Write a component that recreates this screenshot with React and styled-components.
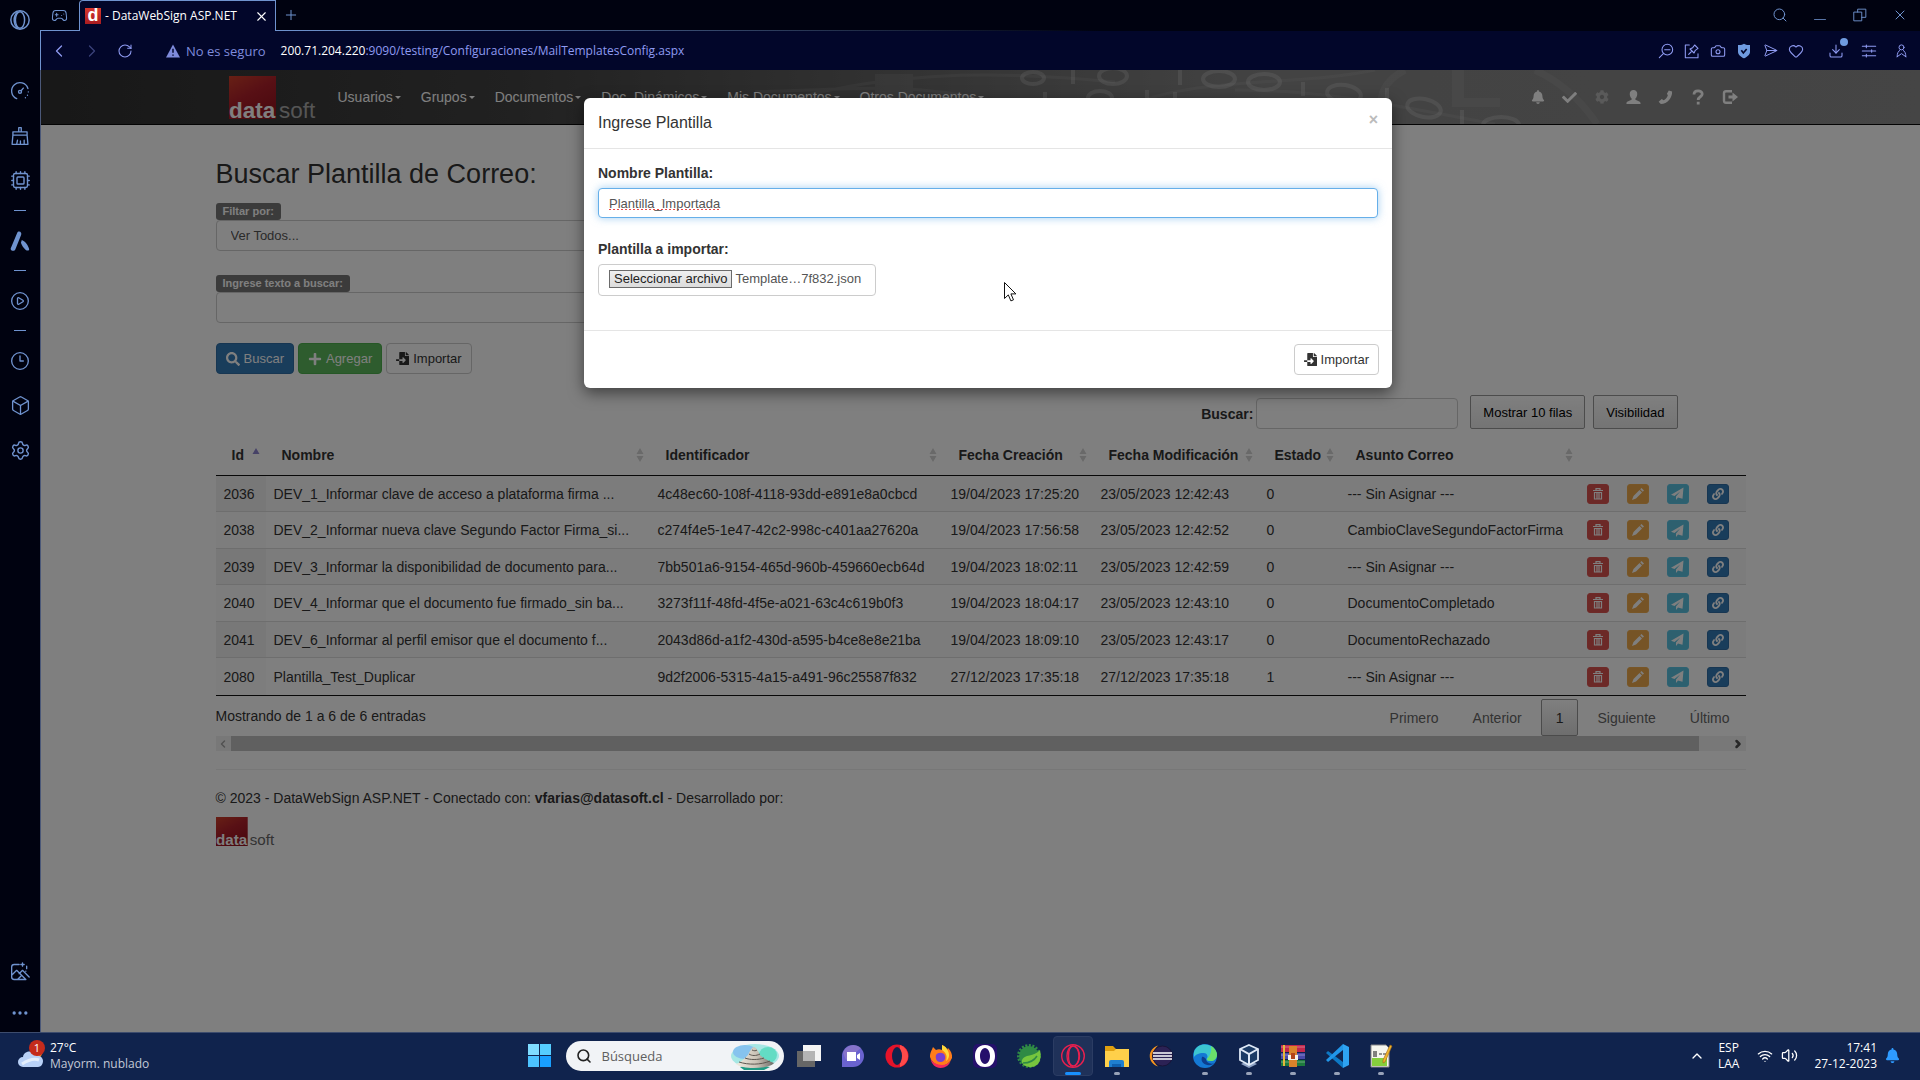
import React from 'react';
import styled, { createGlobalStyle } from 'styled-components';
import {
  Camera, ChevronLeft, ChevronRight, CirclePlay, Clock3, Box, Cpu, Download, Ellipsis,
  Gamepad2, Heart, Plus, RotateCw, Search, SendHorizontal, Settings,
  Volume2, Wifi, X, ChevronUp,
} from 'lucide-react';
import { FaFileImport, FaSearch, FaPlus, FaBell, FaCheck, FaCog, FaLink } from 'react-icons/fa';

const GlobalStyle = createGlobalStyle`
  * { box-sizing: border-box; }
  body {
    margin: 0;
    background: #000210;
    font-family: "Liberation Sans", Arial, sans-serif;
    font-size: 14px;
    line-height: 20px;
    color: #333;
  }
  button, input, select { font-family: inherit; }
  a { color: inherit; text-decoration: none; }
`;

const uiFont = '"Open Sans", "Noto Sans", sans-serif';

/* ---------- browser frame ---------- */

const Desktop = styled.div`
  min-height: 100vh;
  display: flex;
  flex-direction: column;
`;

const Browser = styled.div`
  flex: 1;
  display: flex;
`;

const SideBar = styled.nav`
  width: 40px;
  flex: none;
  display: flex;
  flex-direction: column;
  align-items: center;
  background: #000210;
  color: #6f93cf;
`;

const SideButton = styled.button`
  width: 40px;
  height: ${(p) => p.$height || 45}px;
  padding: 0;
  border: 0;
  background: none;
  color: inherit;
  display: flex;
  align-items: center;
  justify-content: center;
`;

const SideDash = styled.span`
  width: 12px;
  height: 1px;
  margin: 7px 0;
  background: #6f93cf;
`;

const SideGap = styled.div`
  height: ${(p) => p.$height}px;
  flex: ${(p) => (p.$grow ? 1 : 'none')};
`;

const Window = styled.div`
  flex: 1;
  min-width: 0;
  display: flex;
  flex-direction: column;
`;

const TabBar = styled.div`
  height: 31px;
  display: flex;
  align-items: stretch;
  background: #000210;
  color: #6f93cf;
`;

const TabLine = styled.div`
  display: flex;
  align-items: center;
  border-bottom: 1px solid #6f93cf;
  width: ${(p) => p.$width}px;
  justify-content: center;
`;

const Tab = styled.div`
  width: 197px;
  display: flex;
  align-items: center;
  gap: 4px;
  padding: 0 6px 0 5px;
  border: 1px solid #6f93cf;
  border-bottom: 0;
  border-radius: 4px 0 0 0;
  background: #02062a;
  color: #fff;
  font: 12px/16px ${uiFont};
  white-space: nowrap;
`;

const TabTitle = styled.span`
  flex: 1;
`;

const Favicon = styled.span`
  width: 16px;
  height: 16px;
  background: linear-gradient(#d8372e, #a81c20);
  color: #fff;
  font: bold 18px/15px "Liberation Sans", Arial, sans-serif;
  text-align: center;
`;

const PlainButton = styled.button`
  width: ${(p) => p.$width || 26}px;
  height: 26px;
  padding: 0;
  border: 0;
  background: none;
  color: inherit;
  display: flex;
  align-items: center;
  justify-content: center;
  position: relative;
`;

const TabRest = styled.div`
  flex: 1;
  display: flex;
  align-items: center;
  border-bottom: 1px solid;
  border-image: linear-gradient(to right, #6f93cf, #000210 50%) 1;
`;

const Spacer = styled.div`
  flex: 1;
`;

const Separator = styled.span`
  width: 10px;
`;

const AddressBar = styled.div`
  height: 39px;
  display: flex;
  align-items: center;
  padding: 0 2px 0 5px;
  border-left: 1px solid #6f93cf;
  background: #02062a;
  color: #8f9bf2;
  font: 12px/16px ${uiFont};
`;

const Security = styled.span`
  display: flex;
  align-items: center;
  gap: 6px;
  margin-left: 28px;
  font-size: 13px;
  color: #7f8bdc;
`;

const Url = styled.span`
  margin-left: 15px;
  color: #8f9bf2;

  b {
    font-weight: normal;
    color: #fff;
  }
`;

const Notice = styled.span`
  position: absolute;
  top: 0;
  right: 4px;
  width: 8px;
  height: 8px;
  border-radius: 50%;
  background: #6f9be0;
`;

/* ---------- web page ---------- */

const Viewport = styled.div`
  flex: 1;
  position: relative;
  background: #fff;
  border-left: 1px solid #4b5878;
`;

const Header = styled.header`
  height: 55px;
  position: relative;
  border-bottom: 1px solid #080808;
  background: linear-gradient(to right, #303030, #424242 25%, #646464 45%, #868686 65%, #8a8a8a);
`;

const HeaderArt = styled.svg`
  position: absolute;
  inset: 0 auto 0 38%;
  height: 54px;
`;

const HeaderInner = styled.div`
  position: relative;
  height: 54px;
  max-width: 1530px;
  margin: 0 auto;
  padding: 0 0 0 13px;
  display: flex;
  align-items: center;
  color: #fff;
`;

const Menu = styled.nav`
  display: flex;
  gap: 20px;
  margin-left: 21px;
`;

const MenuLink = styled.a`
  display: flex;
  align-items: center;
  gap: 2px;
  white-space: nowrap;

  &::after {
    content: '';
    border: 3px solid transparent;
    border-top: 3px solid #fff;
    border-bottom: 0;
  }
`;

const IconLink = styled.a`
  width: 32px;
  display: flex;
  justify-content: center;
  color: ${(p) => (p.$dim ? '#b4b4b4' : '#fff')};
`;

const Container = styled.main`
  max-width: 1530px;
  margin: 0 auto;
  padding-top: 34px;
`;

const PageTitle = styled.h2`
  margin: 0 0 14px;
  font-size: 27px;
  line-height: 30px;
  font-weight: normal;
`;

const Field = styled.div`
  width: 700px;
  max-width: 100%;
  margin-bottom: ${(p) => p.$space}px;
`;

const Badge = styled.label`
  display: block;
  width: max-content;
  padding: 0 7px;
  border-radius: 3px;
  background: #777;
  color: #fff;
  font-size: 11px;
  line-height: 17px;
  font-weight: bold;
`;

const Control = styled.input`
  display: block;
  width: 100%;
  height: 31px;
  padding: 0 10px;
  border: 1px solid #ccc;
  border-radius: 4px;
  background: #fff;
  color: #555;
  font-size: 13px;
`;

/* the dotted strip is the spell-check mark under the value */
const NameInput = styled(Control)`
  height: 30px;
  border-color: #66afe9;
  outline: 0;
  box-shadow: 0 0 8px rgba(102, 175, 233, 0.6);
  background: repeating-linear-gradient(to right, #e84a4a 0 2px, transparent 2px 4px) 10px 20px / 110px 1px no-repeat #fff;
`;

const SelectBox = styled(Control)`
  padding: 0 14px;
  appearance: none;
`;

const ButtonRow = styled.div`
  display: flex;
  gap: 4px;
  margin-bottom: 21px;
`;

const tones = {
  default: ['#fff', '#ccc', '#333'],
  primary: ['#337ab7', '#2e6da4', '#fff'],
  success: ['#5cb85c', '#4cae4c', '#fff'],
  danger: ['#d9534f', '#dd5450', '#fff'],
  warning: ['#eda94c', '#f0ad4e', '#fff'],
  info: ['#5bc0de', '#5bc4e4', '#fff'],
};

const Button = styled.button`
  height: 31px;
  padding: 0 9px;
  display: flex;
  align-items: center;
  gap: 4px;
  border: 1px solid ${(p) => tones[p.$tone || 'default'][1]};
  border-radius: 4px;
  background: ${(p) => tones[p.$tone || 'default'][0]};
  color: ${(p) => tones[p.$tone || 'default'][2]};
  font-size: 13px;
  white-space: nowrap;
`;

const SmallButton = styled(Button)`
  width: 22px;
  height: 20px;
  padding: 0;
  justify-content: center;
  border-radius: 3px;
`;

const TableTools = styled.div`
  display: flex;
  justify-content: flex-end;
  align-items: flex-end;
  gap: 8px;
  padding-right: 68px;
`;

const SearchLabel = styled.label`
  display: flex;
  align-items: center;
  gap: 3px;
  margin-right: 4px;
  font-weight: bold;

  input {
    width: 202px;
  }
`;

const ToolButton = styled.button`
  height: 34px;
  padding: 0 12px;
  border: 1px solid #999;
  border-radius: 2px;
  background: linear-gradient(#fff, #e9e9e9);
  color: #000;
  font-size: 13px;
`;

const Table = styled.table`
  width: 100%;
  table-layout: fixed;
  border-collapse: separate;
  border-spacing: 0;
  border-bottom: 1px solid #111;
  white-space: nowrap;
`;

const Th = styled.th`
  padding: 16px 6px 10px 16px;
  border-bottom: 1px solid #111;
  text-align: left;

  div {
    display: flex;
    align-items: center;
    justify-content: space-between;
  }
`;

const Tr = styled.tr`
  height: 36px;
  background: #f9f9f9;

  &:nth-child(even) {
    height: 37px;
    background: #fff;
  }

  &:last-child td {
    border-bottom: 0;
  }
`;

const Td = styled.td`
  padding: 0 8px;
  border-bottom: 1px solid #ddd;

  ${Tr} &:first-child {
    background: #fafafa;
  }

  ${Tr}:nth-child(odd) &:first-child {
    background: #f1f1f1;
  }
`;

const TableFoot = styled.div`
  display: flex;
  justify-content: space-between;
  padding-top: 3px;
`;

const Info = styled.div`
  padding-top: 7px;
`;

const Pages = styled.div`
  display: flex;
  gap: 4px;
  padding-right: 1px;
`;

const PageButton = styled.button`
  height: 37px;
  padding: 0 14px;
  border: 1px solid ${(p) => (p.$current ? '#979797' : 'transparent')};
  border-radius: 2px;
  background: ${(p) => (p.$current ? 'linear-gradient(#fff, #dcdcdc)' : 'none')};
  color: ${(p) => (p.$current ? '#333' : '#666')};
  font-size: 14px;
`;

const ScrollTrack = styled.div`
  height: 15px;
  display: flex;
  align-items: center;
  background: #f1f1f1;
`;

const ScrollArrow = styled.span`
  width: 15px;
  display: flex;
  justify-content: center;
`;

const ScrollThumb = styled.div`
  width: 96%;
  height: 15px;
  margin-right: auto;
  background: #c1c1c1;
`;

const Footer = styled.footer`
  margin-top: 18px;
  padding-top: 18px;
  border-top: 1px solid #eee;

  p {
    margin: 0 0 9px;
  }
`;

/* ---------- modal ---------- */

const Backdrop = styled.div`
  position: absolute;
  inset: 0;
  z-index: 1;
  display: flex;
  justify-content: center;
  align-items: flex-start;
  padding: 28px 0 0 15px;
  background: rgba(0, 0, 0, 0.5);
`;

const Dialog = styled.div`
  width: 808px;
  max-width: 100%;
  border-radius: 6px;
  background: #fff;
  box-shadow: 0 5px 15px rgba(0, 0, 0, 0.5);
`;

const DialogHead = styled.div`
  height: 51px;
  padding: 0 14px;
  display: flex;
  align-items: center;
  justify-content: space-between;
  border-bottom: 1px solid #e5e5e5;

  h4 {
    margin: 0;
    font-size: 16px;
    font-weight: normal;
  }
`;

const CloseButton = styled.button`
  padding: 0;
  height: 24px;
  display: flex;
  border: 0;
  background: none;
  color: #bbb;
  font-size: 16px;
  font-weight: bold;
`;

const DialogBody = styled.div`
  padding: 14px 14px 13px;
`;

const DialogField = styled.div`
  margin-bottom: 21px;
`;

const Label = styled.label`
  display: block;
  margin-bottom: 5px;
  font-weight: bold;
`;

const FileBox = styled.div`
  position: relative;
  width: max-content;
  height: 32px;
  padding: 5px 14px 0 10px;
  display: flex;
  align-items: flex-start;
  gap: 3px;
  border: 1px solid #ccc;
  border-radius: 4px;
  color: #555;
  font-size: 13px;
  line-height: 18px;

  input {
    position: absolute;
    inset: 0;
    width: 100%;
    opacity: 0;
  }
`;

const FileFace = styled.span`
  padding: 0 4px;
  border: 1px solid #6b6b6b;
  background: linear-gradient(#efefef, #dcdcdc);
  color: #222;
  line-height: 16px;
`;

const DialogFoot = styled.div`
  padding: 13px;
  display: flex;
  justify-content: flex-end;
  border-top: 1px solid #e5e5e5;
`;

const Pointer = styled.svg`
  position: absolute;
  z-index: 2;
  left: 963px;
  top: 212px;
`;

/* ---------- taskbar ---------- */

const TaskBar = styled.footer`
  height: 48px;
  display: grid;
  grid-template-columns: 1fr auto 1fr;
  align-items: center;
  padding-bottom: 2px;
  border-top: 1px solid #3d4c6d;
  background: #10234d;
  color: #fff;
  font: 12px/16px ${uiFont};
`;

const Weather = styled.div`
  display: flex;
  gap: 5px;
  padding-left: 18px;

  p {
    margin: 0;
    color: #c3c9d6;
  }

  p:first-child {
    color: #fff;
  }
`;

const TaskGroup = styled.div`
  display: flex;
  align-items: center;
  gap: 4px;
`;

const TaskButton = styled.button`
  position: relative;
  width: 40px;
  height: 40px;
  padding: 0;
  display: flex;
  align-items: center;
  justify-content: center;
  border: 1px solid ${(p) => (p.$active ? '#2b3c63' : 'transparent')};
  border-radius: 4px;
  background: ${(p) => (p.$active ? '#1f3159' : 'none')};

  &::after {
    content: '';
    position: absolute;
    bottom: 0;
    width: ${(p) => (p.$active ? 16 : p.$open ? 6 : 0)}px;
    height: 3px;
    border-radius: 2px;
    background: ${(p) => (p.$active ? '#1890ff' : '#98a2b8')};
  }
`;

const SearchPill = styled.label`
  width: 218px;
  height: 30px;
  margin: 0 1px 0 2px;
  padding: 0 4px 0 10px;
  display: flex;
  align-items: center;
  gap: 10px;
  border-radius: 15px;
  background: #f1f3f6;
  color: #222;

  input {
    flex: 1;
    min-width: 0;
    padding: 0;
    border: 0;
    background: none;
    outline: 0;
    font: 13px/16px ${uiFont};
  }

  input::placeholder {
    color: #5e5e5e;
  }
`;

const Tray = styled.div`
  display: flex;
  justify-content: flex-end;
  align-items: center;
  gap: 8px;
  padding-right: 20px;
`;

const TrayText = styled.div`
  text-align: ${(p) => p.$align};
  margin: 0 ${(p) => p.$right || 0}px 0 ${(p) => p.$left || 0}px;
`;

/* ---------- drawings ---------- */

const Svg = ({ size = 24, box = 24, children, ...rest }) => (
  <svg width={size} height={size} viewBox={`0 0 ${box} ${box}`} fill="none" aria-hidden="true" {...rest}>
    {children}
  </svg>
);

const Line = (props) => (
  <Svg stroke="currentColor" strokeWidth="1.6" strokeLinecap="round" strokeLinejoin="round" {...props} />
);

const Logo = ({ height, light, id }) => (
  <svg height={height} viewBox="0 0 88 43" overflow="visible" role="img" aria-label="datasoft">
    <defs>
      <linearGradient id={id} x1="0" y1="0" x2="0.6" y2="1">
        <stop offset="0" stopColor="#d0402a" />
        <stop offset="0.5" stopColor="#b0202a" />
        <stop offset="1" stopColor="#981420" />
      </linearGradient>
    </defs>
    <rect width="47" height="43" fill={`url(#${id})`} />
    <text x="0" y="42" fill="#fff" fontFamily="Liberation Sans" fontWeight="bold" fontSize="22.500">data</text>
    <text x="50" y="42" fill={light} fontFamily="Liberation Sans" fontSize="22.500">soft</text>
  </svg>
);

const OperaIcon = () => (
  <Line size={22}>
    <circle cx="12" cy="12" r="10" />
    <ellipse cx="12" cy="12" rx="5" ry="9" />
    <path d="M9 3.500C4.500 8 4.500 16 9 20.500" />
  </Line>
);

const GaugeIcon = () => (
  <Line size={20}>
    <path d="M8 21.200A10 10 0 1 1 21.500 9" />
    <circle cx="12" cy="13" r="1.800" />
    <path d="M13.300 11.700 16 8.500M22 13v.1M21 17v.1M18.500 20v.1" />
  </Line>
);

const BrushIcon = () => (
  <Line size={20}>
    <path d="M10.500 7V2h3v5M3.500 11V7h17v4M3.500 11h17l1 11h-19zM8 22l1-5M12.500 22v-4M17 22v-5" />
  </Line>
);

const ChipIcon = () => <Cpu size={21} strokeWidth={1.6} />;

const AriaIcon = () => (
  <Svg size={22} fill="currentColor">
    <path d="M11 1.500c2 0 3 2 2.200 4L7 21c-.8 2-3 2-4.500 1-1-.8-.8-2 0-3.500L9 3c.4-1 1-1.500 2-1.500zM14 11c4 1.500 7 6 8 10 .2 1.500-2 2-4 .5C16 20 14 17 13 14z" />
  </Svg>
);

const PictureIcon = () => (
  <Line size={20}>
    <path d="M11 3H5a3 3 0 0 0-3 3v12a3 3 0 0 0 3 3h13M2 16l6-6 11 11M11 14l4-4 8 8M15 1v4M13 3h4M20 5v3M19 11v.1M9 21l4-4" />
  </Line>
);

const WarnIcon = () => (
  <Svg size={14}>
    <path d="M12 1 24 23H0z" fill="currentColor" />
    <path d="M12 8v7M12 18v2" stroke="#02062a" strokeWidth="2.500" />
  </Svg>
);

const ZoomOutIcon = () => (
  <Line size={16}><circle cx="14" cy="10" r="8" /><path d="M8 16 2 22M10 10h8" /></Line>
);

const PinIcon = () => (
  <Line size={16}><path d="M8 3H2v19h19v-6M7 17l5-5M9 9l6 6 2-4 4-3-5-5-3 4z" /></Line>
);

const ShieldIcon = () => (
  <Svg size={16}>
    <path d="M12 1c3 2 6 2 9 2v10c0 5-5 8-9 10-4-2-9-5-9-10V3c3 0 6 0 9-2z" fill="#6f9be0" />
    <path d="m8 11 3 4 5-6" stroke="#02062a" strokeWidth="2.500" />
  </Svg>
);

const SlidersIcon = () => (
  <Line size={16}><path d="M2 5h20M2 12h20M2 19h20M8 3v4M16 10v4M8 17v4" /></Line>
);

const PersonIcon = () => (
  <Line size={15}><circle cx="12" cy="7" r="4" /><path d="M5 22c0-6 2-9 4-10M19 22c0-6-2-9-4-10M5 22l7-5 7 5" /></Line>
);

const RestoreIcon = () => (
  <Line size={14} strokeLinejoin="miter"><path d="M2 7h13v15H2zM8 7V2h14v14h-7" /></Line>
);

const UserIcon = () => (
  <Svg size={15} box={16} fill="currentColor">
    <path d="M8 0c2.600 0 4 1.800 4 4.200 0 2-.8 3.800-2 4.800v1.500c2 .8 5.500 2 5.500 3.500V15H.5v-1c0-1.500 3.500-2.700 5.500-3.500V9C4.800 8 4 6.200 4 4.200 4 1.800 5.400 0 8 0z" />
  </Svg>
);

const PhoneIcon = () => (
  <Svg size={15} box={16} fill="currentColor">
    <path d="M11.500.5 15 1.500c.6 6-5 13.500-12 13.500L.7 12.500 4 9.700l2 1.300c2-1 4-3.500 4.500-5.500L9.500 4z" />
  </Svg>
);

const HelpIcon = () => (
  <Svg size={16} box={16} stroke="currentColor" strokeWidth="2.800">
    <path d="M4 5.500C4 .5 12.200.8 12.200 5 12.200 8 8.200 7.500 8.200 11M8.200 12.700v2.800" />
  </Svg>
);

const ExitIcon = () => (
  <Svg size={16} box={16}>
    <path d="M10 2.200H4A2 2 0 0 0 2 4v8a2 2 0 0 0 2 1.800h6" stroke="currentColor" strokeWidth="2.400" />
    <path d="M6.500 6.500h4V3.500L16 8l-5.500 4.500v-3h-4z" fill="currentColor" />
  </Svg>
);

const TrashIcon = () => (
  <Svg size={12} box={12} stroke="#fff">
    <path d="M1 2.500h10M4 2V.6h4V2" strokeWidth="1.200" />
    <path d="M2.500 4.500h7v6.500h-7zM5 4.500v6.500M7 4.500v6.500" strokeWidth="1.200" />
  </Svg>
);

const PencilIcon = () => (
  <Svg size={12} box={12} fill="#fff"><path d="M9.500 0 12 2.500 10.700 3.800 8.200 1.300zM7.500 2 10 4.500 4 10.500 0 12l1.500-4z" /></Svg>
);

const SendIcon = () => (
  <Svg size={13} box={13} fill="#fff"><path d="M12.500.5 0 7.800l3.500 1.300L11 3zM12.500.5 5 9.500V13l2-2.500 4.500 1.300z" /></Svg>
);

const SortIcon = () => (
  <svg width="8" height="14" viewBox="0 0 8 14" fill="#d2d2d2" aria-hidden="true">
    <path d="M4 0 7.500 6h-7zM4 14 .5 8h7z" />
  </svg>
);

const SortedIcon = () => (
  <svg width="8" height="14" viewBox="0 0 8 14" fill="#8d85cf" aria-hidden="true">
    <path d="M4 0 7.500 6h-7z" />
  </svg>
);

const CloudIcon = () => (
  <Svg size={27} box={27}>
    <circle cx="18" cy="13" r="6" fill="#f38b1c" />
    <path d="M5 27a5 5 0 0 1 0-10c1-7 12-7 13-1 4-1 7 2 7 5s-2 6-5 6z" fill="#b9d1f7" />
    <path d="M4 24c6-4 12-6 17-4" stroke="#e4eefc" strokeWidth="3" />
    <circle cx="19" cy="8" r="8" fill="#c42b1c" />
    <text x="19" y="12" fontSize="11" fill="#fff" textAnchor="middle" fontFamily="Open Sans">1</text>
  </Svg>
);

const ShellIcon = () => (
  <svg width="50" height="28" viewBox="0 0 50 28" aria-hidden="true">
    <defs>
      <linearGradient id="shell" x1="0" y1="0" x2="1" y2="0">
        <stop offset="0" stopColor="#f1ebdf" />
        <stop offset="0.55" stopColor="#c9c2b6" />
        <stop offset="1" stopColor="#6d6a66" />
      </linearGradient>
    </defs>
    <ellipse cx="25" cy="14" rx="24" ry="12" fill="#a6e7e4" />
    <ellipse cx="15" cy="10" rx="12" ry="7" fill="#86c3ee" />
    <ellipse cx="38" cy="13" rx="9" ry="8" fill="#63dcc4" />
    <path d="M10 25c8-2 22-2 30 0l-6 3H14z" fill="#1f9b84" />
    <path d="M6 22c4-1 8-5 12-9 2-4 4-8 6-8s4 4 6 8c4 4 9 6 14 8-4 6-32 7-38 1z" fill="url(#shell)" />
    <path d="M22 8c2 1 4 1 5 0M19 12c3 2 7 2 11 0M15 16c5 2 13 2 19 0M9 20c9 3 22 3 31-1" stroke="#5c5750" fill="none" />
  </svg>
);

const WindowsIcon = () => (
  <Svg size={23} box={23}>
    <path d="M0 0h11v11H0z" fill="#7fdcff" />
    <path d="M12 0h11v11H12z" fill="#56cdff" />
    <path d="M0 12h11v11H0z" fill="#4cc3ff" />
    <path d="M12 12h11v11H12z" fill="#199fff" />
  </Svg>
);

const taskIcons = {
  'Vista de tareas': (
    <Svg>
      <path d="M6 1h18v16H6z" fill="#f4f4f4" />
      <path d="M0 7h18v16H0z" fill="#666" />
      <path d="M6 7h12v10H6z" fill="#b4b4b4" />
    </Svg>
  ),
  Chat: (
    <Svg>
      <path d="M1 23V12a11 11 0 1 1 11 11z" fill="#6a63d0" />
      <path d="M2 9a11 11 0 0 1 18-5L5 16z" fill="#9a7fc6" opacity=".6" />
      <path d="M6 8h9v9H6zM16 11l3-2v7l-3-2z" fill="#fff" />
    </Svg>
  ),
  Opera: (
    <Svg>
      <circle cx="12" cy="12" r="11.500" fill="#e5132a" />
      <path d="M15 1a11.500 11.500 0 0 1 0 22z" fill="#ff4a4a" />
      <ellipse cx="12" cy="12" rx="5" ry="9" fill="#10234d" />
    </Svg>
  ),
  Firefox: (
    <Svg>
      <path d="M1 13C1 8 3 6 4 3l3 3c2-1 4-1 6 0V1c3 1 4 3 5 5l1-2c3 3 4.500 6 4 10A11.500 11.500 0 0 1 1 13z" fill="#ff7d1a" />
      <path d="M13 1c3 1 5 3 6 6 2 4 1 8-2 10 2-6-1-9-4-11z" fill="#ffd83a" />
      <path d="M1.500 15c4 7 16 8 20 2-1 4-5 7-10 7S2.500 20 1.500 15z" fill="#f5295c" />
      <path d="M7 11c2-3 8-3 9 1s-2 6-5 6-5-3-4-7z" fill="#7a3fd0" />
    </Svg>
  ),
  'Opera Crypto': (
    <Svg>
      <rect width="24" height="24" rx="5" fill="#25106b" />
      <path fillRule="evenodd" d="M12 1c7 0 10 5 10 11s-3 11-10 11S2 18 2 12 5 1 12 1zm0 3c-3 0-5 4-5 8s2 8 5 8 5-4 5-8-2-8-5-8z" fill="#fff" />
    </Svg>
  ),
  Spring: (
    <Svg>
      <circle cx="12" cy="12" r="10.500" stroke="#2f8a45" strokeWidth="3" strokeDasharray="2 1.500" />
      <circle cx="12" cy="12" r="10" fill="#2f8a45" />
      <path d="M23 6c2 9-1 17-9 17C8 23 4 20 5 16 7 10 17 13 23 6z" fill="#76c63e" />
      <path d="M6 19c6 0 11-2 14-7" stroke="#2f8a45" strokeWidth="1.500" />
    </Svg>
  ),
  'Opera GX': (
    <Svg stroke="#e8204f" strokeWidth="1.400">
      <circle cx="12" cy="12" r="11.300" />
      <ellipse cx="12" cy="12" rx="6" ry="10" />
      <path d="M12 2C6 3 6 21 12 22M14 2c6 5 6 15 0 20" />
    </Svg>
  ),
  Explorador: (
    <Svg>
      <path d="M0 2h8l3 3h12v5H0z" fill="#e0a010" />
      <path d="M0 7h9l2-2h13v18H0z" fill="#ffd04a" />
      <path d="M4 23v-5a2 2 0 0 1 2-2h11a2 2 0 0 1 2 2v5z" fill="#1f7fd0" />
      <path d="M7 20h9v3H7z" fill="#0f5fae" />
    </Svg>
  ),
  Eclipse: (
    <Svg>
      <path d="M9 1.500C-2 5-2 19 9 22.500 3 18 3 6 9 1.500z" fill="#f7941e" />
      <circle cx="13.500" cy="12" r="10" fill="#2c2255" stroke="#1a1438" />
      <path d="M4 9h19M4 12h19M4 15h19" stroke="#fff" strokeWidth="1.300" />
    </Svg>
  ),
  Edge: (
    <Svg>
      <circle cx="12" cy="12" r="12" fill="#1479d4" />
      <path d="M1 8C4-2 20-2 23.500 9c1 5-2 8-6 8-3 0-4-1-4-2 2-2 1-6-3-6-5 0-8 2-9.500 4z" fill="#3cc6d0" />
      <path d="M18 2c4 2 6 6 6 9-.5 4-3 6-6 6-3 0-4-1-4-2 3-3 5-8 4-13z" fill="#6ae06a" />
      <path d="M9 13c-2 5 3 9 9 8l4-2c-5 2-9-1-9-4-1-1-3-3-4-2z" fill="#0c3f8e" />
    </Svg>
  ),
  VirtualBox: (
    <Svg>
      <path d="m12 16 8 4-8 4-8-4z" fill="#8ea2c4" />
      <path d="m12 1 9 4v11l-9 5-9-5V5z" fill="#1b3b66" stroke="#dfe9f7" strokeWidth="1.800" />
      <path d="m3 5 9 5 9-5M12 10v11" stroke="#dfe9f7" strokeWidth="2" />
    </Svg>
  ),
  WinRAR: (
    <Svg>
      <path d="M0 1h24v7H0z" fill="#c2274b" />
      <path d="M0 9h24v6H0z" fill="#4a49a8" />
      <path d="M0 16h24v6H0z" fill="#1d7a3d" />
      <path d="M0 3h24M0 11h24M0 18h24" stroke="#fff" opacity=".35" />
      <path d="M3 1v21" stroke="#e5b63a" strokeWidth="2" />
      <path d="M8 2h8v21H8z" fill="#d9822b" />
      <path d="M7 11h10v5H7z" fill="#f4f1e8" />
      <path d="M10 9h4v6h-4z" fill="#b3431a" />
    </Svg>
  ),
  'Visual Studio Code': (
    <Svg>
      <path d="M18 0v24L1 9l2-2 15 11z" fill="#0d78c4" />
      <path d="M18 0v6L3 18l-2-2z" fill="#2196e8" />
      <path d="m18 0 6 3v18l-6 3z" fill="#2ea3f2" />
    </Svg>
  ),
  'Notepad++': (
    <Svg>
      <path d="M2 1h15l3 3v19H2z" fill="#f6f6ee" stroke="#888" />
      <path d="M3 14h15v8H3z" fill="#86cf3c" />
      <path d="M7 7v6M10 10h3M14 10h3M5 7v6" stroke="#333" strokeWidth="1.200" />
      <path d="m21 1 2 1-7 16-2 1v-3z" fill="#f0b52a" stroke="#a0641a" strokeWidth=".6" />
    </Svg>
  ),
};

/* ---------- data ---------- */

const menu = ['Usuarios', 'Grupos', 'Documentos', 'Doc. Dinámicos', 'Mis Documentos', 'Otros Documentos'];

const columns = ['Nombre', 'Identificador', 'Fecha Creación', 'Fecha Modificación', 'Estado', 'Asunto Correo'];

const widths = [50, null, 293, 150, 166, 81, 239, 40, 40, 40, 47];

const rows = [
  ['2036', 'DEV_1_Informar clave de acceso a plataforma firma ...', '4c48ec60-108f-4118-93dd-e891e8a0cbcd', '19/04/2023 17:25:20', '23/05/2023 12:42:43', '0', '--- Sin Asignar ---'],
  ['2038', 'DEV_2_Informar nueva clave Segundo Factor Firma_si...', 'c274f4e5-1e47-42c2-998c-c401aa27620a', '19/04/2023 17:56:58', '23/05/2023 12:42:52', '0', 'CambioClaveSegundoFactorFirma'],
  ['2039', 'DEV_3_Informar la disponibilidad de documento para...', '7bb501a6-9154-465d-960b-459660ecb64d', '19/04/2023 18:02:11', '23/05/2023 12:42:59', '0', '--- Sin Asignar ---'],
  ['2040', 'DEV_4_Informar que el documento fue firmado_sin ba...', '3273f11f-48fd-4f5e-a021-63c4c619b0f3', '19/04/2023 18:04:17', '23/05/2023 12:43:10', '0', 'DocumentoCompletado'],
  ['2041', 'DEV_6_Informar al perfil emisor que el documento f...', '2043d86d-a1f2-430d-a595-b4ce8e8e21ba', '19/04/2023 18:09:10', '23/05/2023 12:43:17', '0', 'DocumentoRechazado'],
  ['2080', 'Plantilla_Test_Duplicar', '9d2f2006-5315-4a15-a491-96c25587f832', '27/12/2023 17:35:18', '27/12/2023 17:35:18', '1', '--- Sin Asignar ---'],
];

const actions = [
  ['danger', 'Eliminar', <TrashIcon />],
  ['warning', 'Editar', <PencilIcon />],
  ['info', 'Enviar', <SendIcon />],
  ['primary', 'Duplicar', <FaLink size={12} />],
];

const openTasks = ['Explorador', 'Edge', 'VirtualBox', 'WinRAR', 'Visual Studio Code', 'Notepad++'];

/* ---------- parts ---------- */

const Side = () => (
  <SideBar>
    <SideButton $height={40} aria-label="Opera"><OperaIcon /></SideButton>
    <SideGap $height={28} />
    <SideButton aria-label="Inicio"><GaugeIcon /></SideButton>
    <SideButton aria-label="Limpiar"><BrushIcon /></SideButton>
    <SideButton aria-label="Control"><ChipIcon /></SideButton>
    <SideDash />
    <SideButton aria-label="Aria"><AriaIcon /></SideButton>
    <SideDash />
    <SideButton aria-label="Reproductor"><CirclePlay size={20} strokeWidth={1.6} /></SideButton>
    <SideDash />
    <SideButton aria-label="Historial"><Clock3 size={20} strokeWidth={1.6} /></SideButton>
    <SideButton aria-label="Extensiones"><Box size={21} strokeWidth={1.5} /></SideButton>
    <SideButton aria-label="Ajustes"><Settings size={21} strokeWidth={1.6} /></SideButton>
    <SideGap $grow />
    <SideButton aria-label="Fondo"><PictureIcon /></SideButton>
    <SideButton $height={38} aria-label="Más"><Ellipsis size={20} /></SideButton>
  </SideBar>
);

const Chrome = () => (
  <>
    <TabBar>
      <TabLine $width={39}><Gamepad2 size={17} strokeWidth={1.5} /></TabLine>
      <Tab>
        <Favicon>d</Favicon>
        <TabTitle>- DataWebSign ASP.NET</TabTitle>
        <X size={15} strokeWidth={1.8} />
      </Tab>
      <TabRest>
        <PlainButton $width={30} aria-label="Nueva pestaña"><Plus size={16} strokeWidth={1.5} /></PlainButton>
        <Spacer />
        <PlainButton $width={40} aria-label="Buscar"><Search size={16} strokeWidth={1.5} /></PlainButton>
        <PlainButton $width={40} aria-label="Minimizar"><Line size={12}><path d="M1 21h22" /></Line></PlainButton>
        <PlainButton $width={40} aria-label="Restaurar"><RestoreIcon /></PlainButton>
        <PlainButton $width={40} aria-label="Cerrar"><X size={16} strokeWidth={1.5} /></PlainButton>
      </TabRest>
    </TabBar>
    <AddressBar>
      <PlainButton aria-label="Atrás"><ChevronLeft size={20} strokeWidth={1.5} /></PlainButton>
      <PlainButton $width={40} aria-label="Adelante"><ChevronRight size={20} strokeWidth={1.5} opacity={0.4} /></PlainButton>
      <PlainButton aria-label="Recargar"><RotateCw size={16} strokeWidth={1.6} /></PlainButton>
      <Security><WarnIcon />No es seguro</Security>
      <Url><b>200.71.204.220</b>:9090/testing/Configuraciones/MailTemplatesConfig.aspx</Url>
      <Spacer />
      <PlainButton aria-label="Alejar"><ZoomOutIcon /></PlainButton>
      <PlainButton aria-label="Fijar"><PinIcon /></PlainButton>
      <PlainButton aria-label="Captura"><Camera size={16} strokeWidth={1.6} /></PlainButton>
      <PlainButton aria-label="Protección"><ShieldIcon /></PlainButton>
      <PlainButton aria-label="Enviar"><SendHorizontal size={15} strokeWidth={1.6} /></PlainButton>
      <PlainButton aria-label="Favorito"><Heart size={16} strokeWidth={1.6} /></PlainButton>
      <Separator />
      <PlainButton $width={33} aria-label="Descargas"><Download size={16} strokeWidth={1.6} /><Notice /></PlainButton>
      <PlainButton $width={33} aria-label="Configuración"><SlidersIcon /></PlainButton>
      <PlainButton $width={33} aria-label="Perfil"><PersonIcon /></PlainButton>
    </AddressBar>
  </>
);

const PageHeader = () => (
  <Header>
    <HeaderArt viewBox="0 0 850 54" fill="none" stroke="#fff" aria-hidden="true">
      <g opacity=".08">
        <path d="M0 40C120 0 240 0 360 12M-90 10c80 30 200-10 320 20M330 54C430 0 520 20 620 0M480 20c100 0 180 20 260 34" strokeWidth="3" />
        <path d="M780 0c30 14 50 36 62 54M650 0c-20 10-28 24-24 54" strokeWidth="7" />
        <path d="M-92 0h38v44h-38zM120 4h38v40h-38zM697 0h12v28h36v9h-48z" fill="#fff" stroke="none" />
      </g>
      <g opacity=".2" strokeWidth="4">
        <ellipse cx="278" cy="8" rx="11" ry="6" />
        <path d="M318 0v14M425 0v15" />
        <ellipse cx="358" cy="6" rx="14" ry="8" />
        <ellipse cx="464" cy="9" rx="16" ry="8" />
        <ellipse cx="509" cy="12" rx="16" ry="8" />
        <path d="M548 12v14M632 18v16" />
        <ellipse cx="589" cy="24" rx="17" ry="9" transform="rotate(8 589 24)" />
        <ellipse cx="669" cy="38" rx="17" ry="9" transform="rotate(12 669 38)" />
        <path d="M707 40v14" />
        <ellipse cx="746" cy="55" rx="18" ry="8" />
        <path d="M290 22v12M392 20v12M420 22v12" />
        <ellipse cx="345" cy="28" rx="12" ry="7" />
      </g>
    </HeaderArt>
    <HeaderInner>
      <Logo height={43} light="#aaa" id="brand-top" />
      <Menu>
        {menu.map((item) => <MenuLink key={item} href="#">{item}</MenuLink>)}
      </Menu>
      <Spacer />
      <IconLink href="#" aria-label="Notificaciones"><FaBell size={14} /></IconLink>
      <IconLink href="#" aria-label="Firmar"><FaCheck size={15} /></IconLink>
      <IconLink href="#" aria-label="Configurar" $dim><FaCog size={14} /></IconLink>
      <IconLink href="#" aria-label="Cuenta"><UserIcon /></IconLink>
      <IconLink href="#" aria-label="Contacto"><PhoneIcon /></IconLink>
      <IconLink href="#" aria-label="Ayuda"><HelpIcon /></IconLink>
      <IconLink href="#" aria-label="Salir"><ExitIcon /></IconLink>
    </HeaderInner>
  </Header>
);

const TemplatesTable = () => (
  <Table>
    <colgroup>
      {widths.map((w, i) => <col key={i} width={w || undefined} />)}
    </colgroup>
    <thead>
      <tr>
        <Th><div>Id<SortedIcon /></div></Th>
        {columns.map((c) => <Th key={c}><div>{c}<SortIcon /></div></Th>)}
        {actions.map(([tone]) => <Th key={tone} />)}
      </tr>
    </thead>
    <tbody>
      {rows.map((row) => (
        <Tr key={row[0]}>
          {row.map((cell, i) => <Td key={i}>{cell}</Td>)}
          {actions.map(([tone, label, icon]) => (
            <Td key={tone}><SmallButton $tone={tone} aria-label={label}>{icon}</SmallButton></Td>
          ))}
        </Tr>
      ))}
    </tbody>
  </Table>
);

const ImportDialog = () => (
  <Backdrop>
    <Dialog role="dialog" aria-labelledby="dialog-title">
      <DialogHead>
        <h4 id="dialog-title">Ingrese Plantilla</h4>
        <CloseButton aria-label="Cerrar">×</CloseButton>
      </DialogHead>
      <DialogBody>
        <DialogField>
          <Label htmlFor="nombre">Nombre Plantilla:</Label>
          <NameInput id="nombre" defaultValue="Plantilla_Importada" />
        </DialogField>
        <DialogField>
          <Label htmlFor="archivo">Plantilla a importar:</Label>
          <FileBox>
            <FileFace>Seleccionar archivo</FileFace>
            Template…7f832.json
            <input type="file" id="archivo" />
          </FileBox>
        </DialogField>
      </DialogBody>
      <DialogFoot>
        <Button><FaFileImport size={13} />Importar</Button>
      </DialogFoot>
    </Dialog>
  </Backdrop>
);

const Page = () => (
  <Viewport>
    <PageHeader />
    <Container>
      <PageTitle>Buscar Plantilla de Correo:</PageTitle>
      <Field $space={24}>
        <Badge htmlFor="filtro">Filtar por:</Badge>
        <SelectBox as="select" id="filtro">
          <option>Ver Todos...</option>
        </SelectBox>
      </Field>
      <Field $space={20}>
        <Badge htmlFor="texto">Ingrese texto a buscar:</Badge>
        <Control id="texto" />
      </Field>
      <ButtonRow>
        <Button $tone="primary"><FaSearch size={14} />Buscar</Button>
        <Button $tone="success"><FaPlus size={14} />Agregar</Button>
        <Button><FaFileImport size={13} />Importar</Button>
      </ButtonRow>
      <TableTools>
        <SearchLabel>Buscar:<Control type="search" /></SearchLabel>
        <ToolButton>Mostrar 10 filas</ToolButton>
        <ToolButton>Visibilidad</ToolButton>
      </TableTools>
      <TemplatesTable />
      <TableFoot>
        <Info>Mostrando de 1 a 6 de 6 entradas</Info>
        <Pages>
          <PageButton>Primero</PageButton>
          <PageButton>Anterior</PageButton>
          <PageButton $current>1</PageButton>
          <PageButton>Siguiente</PageButton>
          <PageButton>Último</PageButton>
        </Pages>
      </TableFoot>
      <ScrollTrack>
        <ScrollArrow><ChevronLeft size={12} strokeWidth={3} color="#a3a3a3" /></ScrollArrow>
        <ScrollThumb />
        <ScrollArrow><ChevronRight size={12} strokeWidth={5} color="#505050" /></ScrollArrow>
      </ScrollTrack>
      <Footer>
        <p>© 2023 - DataWebSign ASP.NET - Conectado con: <b>vfarias@datasoft.cl</b> - Desarrollado por:</p>
        <Logo height={29} light="#666" id="brand-foot" />
      </Footer>
    </Container>
    <ImportDialog />
    <Pointer width="13" height="20" viewBox="0 0 13 20" aria-hidden="true">
      <path d="M.5.5v16l3.800-3.600 2.600 6 2.600-1.100-2.600-5.900h5z" fill="#fff" stroke="#111" />
    </Pointer>
  </Viewport>
);

const Tasks = () => (
  <TaskBar>
    <Weather>
      <CloudIcon />
      <div>
        <p>27°C</p>
        <p>Mayorm. nublado</p>
      </div>
    </Weather>
    <TaskGroup>
      <TaskButton aria-label="Inicio"><WindowsIcon /></TaskButton>
      <SearchPill>
        <Search size={16} strokeWidth={2.4} />
        <input type="search" placeholder="Búsqueda" aria-label="Búsqueda" />
        <ShellIcon />
      </SearchPill>
      {Object.keys(taskIcons).map((name) => (
        <TaskButton key={name} aria-label={name} $active={name === 'Opera GX'} $open={openTasks.includes(name)}>
          {taskIcons[name]}
        </TaskButton>
      ))}
    </TaskGroup>
    <Tray>
      <ChevronUp size={16} />
      <TrayText $align="center" $left={5} $right={10}>ESP<br />LAA</TrayText>
      <Wifi size={16} strokeWidth={2} />
      <Volume2 size={17} strokeWidth={1.8} />
      <TrayText $align="right" $left={8}>17:41<br />27-12-2023</TrayText>
      <FaBell size={15} color="#2e9bff" />
    </Tray>
  </TaskBar>
);

export default () => (
  <Desktop>
    <GlobalStyle />
    <Browser>
      <Side />
      <Window>
        <Chrome />
        <Page />
      </Window>
    </Browser>
    <Tasks />
  </Desktop>
);
